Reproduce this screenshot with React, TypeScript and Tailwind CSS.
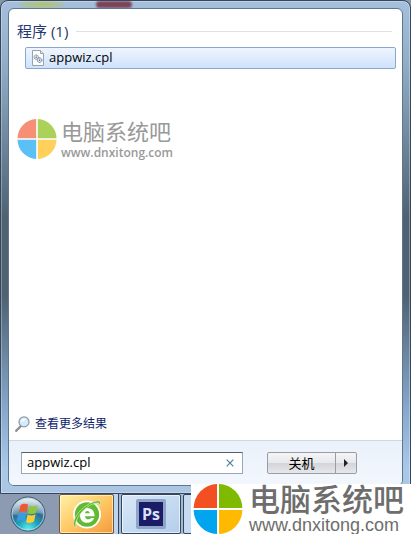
import clsx from 'clsx';

const uiFont = "font-['Open_Sans','Noto_Sans_CJK_SC',sans-serif]";
const logoFont = "font-['Liberation_Sans','Noto_Sans_CJK_SC',sans-serif]";

const FileIcon = () => (
  <svg viewBox="0 0 14 16" className="h-4 w-3.5 shrink-0" aria-hidden="true">
    <path d="M1.5 .5h8l3 3v12h-11z" fill="#fdfdfe" stroke="#9aa3ad" />
    <path d="M9.5 .5v3h3" fill="#e3e7ec" stroke="#9aa3ad" />
    <circle cx="5.2" cy="7.2" r="2.2" fill="#dce6f0" stroke="#62788f" strokeDasharray="1 .5" />
    <circle cx="8.6" cy="10.2" r="2.3" fill="#dce6f0" stroke="#4f6680" strokeDasharray="1 .5" />
    <circle cx="5.2" cy="7.2" r=".7" fill="#4f6680" />
    <circle cx="8.6" cy="10.2" r=".7" fill="#4f6680" />
  </svg>
);

const SearchIcon = () => (
  <svg viewBox="0 0 16 16" className="size-4 shrink-0" aria-hidden="true">
    <path d="M1.2 14.8l4.8-5" stroke="#77777d" strokeWidth="2.2" strokeLinecap="round" />
    <path d="M1.2 14.5l4.5-4.8" stroke="#b9b9bd" strokeWidth=".8" strokeLinecap="round" />
    <circle cx="9" cy="5.9" r="5" fill="#d5eafa" stroke="#8a98a6" strokeWidth="1.2" />
    <path d="M5.8 5.6a3.4 3.4 0 0 1 5-2.6c-1 1.7-2.8 2.7-5 2.6z" fill="#fff" />
  </svg>
);

const StartOrb = () => (
  <svg viewBox="0 0 36 36" className="size-9" aria-hidden="true">
    <defs>
      <radialGradient id="orb" cx=".5" cy=".95" r=".85">
        <stop offset="0" stopColor="#5ff0ee" />
        <stop offset=".35" stopColor="#1fa5c0" />
        <stop offset=".65" stopColor="#2f6d92" />
        <stop offset="1" stopColor="#a3b8c8" />
      </radialGradient>
      <linearGradient id="gloss" x1="0" y1="0" x2="0" y2="1">
        <stop offset="0" stopColor="#fff" stopOpacity=".75" />
        <stop offset="1" stopColor="#b8cbd8" stopOpacity=".3" />
      </linearGradient>
    </defs>
    <circle cx="18" cy="18" r="17" fill="url(#orb)" stroke="#3d5870" />
    <circle cx="18" cy="18" r="16" fill="none" stroke="#c5e4ec" strokeOpacity=".75" />
    <path d="M2.5 18A15.5 15.5 0 0 1 33.5 18C26 15 12 22 2.5 18z" fill="url(#gloss)" />
    <path d="M10.5 9.2c2.4-1.8 5-1.9 7.7-.4l-1.7 7.7c-2.6-1.4-5.2-1.2-7.7.5z" fill="#ec5a2d" />
    <path d="M19.6 9.5c2.7 1.3 5.2 1.2 8-.5l-1.7 7.7c-2.7 1.7-5.2 1.8-7.9.6z" fill="#8fc73e" />
    <path d="M8.4 18.3c2.5-1.7 5.1-1.9 7.7-.4l-1.6 7.4c-2.6-1.4-5.2-1.2-7.8.4z" fill="#3b9be0" />
    <path d="M17.6 18.7c2.7 1.2 5.2 1.1 8-.5L24 25.6c-2.7 1.7-5.3 1.8-8 .6z" fill="#ffcb30" />
  </svg>
);

const BrowserIcon = () => (
  <svg viewBox="0 0 32 32" className="size-8" aria-hidden="true">
    <circle cx="16" cy="16.5" r="14" fill="#fff" />
    <circle cx="16" cy="16.5" r="12.2" fill="#5fbb31" />
    <path d="M9 17.2a7.3 7.3 0 0 1 14.6 0v1.1H14c.3 3.4 4.4 4 6 1.7h3.3c-1.3 3.2-3.9 4.8-7.2 4.8-4.2 0-7.1-3-7.1-7.6zm5-2h4.7c-.3-2.8-4.2-2.8-4.7 0z" fill="#fff" />
    <path d="M5.5 29C.5 29.5 2 20 9.5 12.5 17 5 27 1 29 3.5c1 1.3.5 3-1 5 .7-2.3.4-3.2-.8-3.5C23 4 14 9.5 8.8 16.5 4.5 22.5 3.5 28 5.5 29z" fill="#5fb52e" stroke="#e6f8c9" strokeWidth=".6" />
  </svg>
);

const SiteLogo = ({ className, faded = false }: { className: string; faded?: boolean }) => (
  <svg viewBox="0 0 40 40" className={clsx('shrink-0', className)} aria-hidden="true">
    <path d="M19.2 19.2H.5A19.5 19.5 0 0 1 19.2 0z" fill={faded ? '#f58f76' : '#f25022'} />
    <path d="M20.8 19.2V0a19.5 19.5 0 0 1 18.7 19.2z" fill={faded ? '#abd15a' : '#7fba00'} />
    <path d="M19.2 20.8V40A19.5 19.5 0 0 1 .5 20.8z" fill={faded ? '#5bc0f5' : '#00a4ef'} />
    <path d="M20.8 20.8h18.7A19.5 19.5 0 0 1 20.8 40z" fill={faded ? '#ffd05c' : '#ffb900'} />
  </svg>
);

const StartMenu = () => (
  <section className="flex grow flex-col rounded-t-lg border border-[#34475c] bg-[linear-gradient(180deg,#a5bfdc_0,#92afc9_12%,#4e6272_44%,#4e6272_60%,#87a8cc_83%,#a9c9ea_95%,#abc5e2_100%)] p-[7px] shadow-[inset_0_0_0_1px_rgba(255,255,255,0.3)]">
    <div className="flex grow flex-col overflow-hidden rounded-md border border-[#5e768e] bg-white">
      <div className="flex grow flex-col px-1.5 pt-3">
        <h1 className="flex items-center gap-2 px-0.5 text-[15px] leading-5 text-[#26376f]">
          程序 (1)
          <span className="mr-0.5 h-px grow bg-[#dbe2e8]" />
        </h1>
        <a href="#appwiz" className="mt-1.5 ml-2.5 flex h-[22px] items-center gap-1 rounded-xs border border-[#8ba8cc] bg-linear-to-b from-[#eff5fe] to-[#cfe2fc] pl-[5px] text-[13px] text-black">
          <FileIcon />
          appwiz.cpl
        </a>
        <div className="mt-12 ml-0.5 flex items-center gap-1 text-[#999]">
          <SiteLogo className="size-10" faded />
          <div className="pt-1">
            <p className={clsx('text-[22px] leading-6', logoFont)}>电脑系统吧</p>
            <p className="text-xs leading-4 font-semibold">www.dnxitong.com</p>
          </div>
        </div>
        <a href="#more" className="mt-auto mb-2 flex items-center gap-1 text-xs text-[#101d6b]">
          <SearchIcon />
          查看更多结果
        </a>
      </div>
      <form className="flex items-start justify-between border-t border-[#ccd9e5] bg-linear-to-b from-[#eaf1fa] to-[#f3f7fd] pt-[11px] pr-[45px] pb-[11px] pl-3">
        <div className="flex h-[22px] w-[222px] items-center border border-[#9aa6b3] border-t-[#58616b] bg-white pr-2 pl-[5px]">
          <input aria-label="搜索程序和文件" defaultValue="appwiz.cpl" className="min-w-0 grow text-[13px] text-black outline-none" />
          <button type="reset" aria-label="清除">
            <svg viewBox="0 0 8 8" className="size-2" stroke="#4d7f9c" strokeWidth="1.2">
              <path d="M.7 .7l6.6 6.6M7.3 .7L.7 7.3" />
            </svg>
          </button>
        </div>
        <div className="flex h-[22px] rounded-xs border border-[#9a9da3] bg-[linear-gradient(180deg,#f4f4f6_0,#e8e9ec_48%,#d3d5da_52%,#e6e7ea_100%)]">
          <button type="button" className="w-[67px] text-[13px] leading-5 text-black">关机</button>
          <button type="button" aria-label="关机选项" className="flex w-[21px] items-center justify-center border-l border-[#9a9da3]">
            <svg viewBox="0 0 4 8" className="h-2 w-1" fill="#222"><path d="M0 0l4 4-4 4z" /></svg>
          </button>
        </div>
      </form>
    </div>
  </section>
);

const taskClasses = 'flex h-10 items-center justify-center rounded-xs border shadow-[inset_0_0_0_1px_rgba(255,255,255,0.6)]';

const Taskbar = () => (
  <nav className="flex h-10 shrink-0 bg-[#a3bad3]">
    <button type="button" aria-label="开始" className="flex w-[59px] items-center justify-center bg-[#8c9bb2] pr-1">
      <StartOrb />
    </button>
    <button type="button" aria-label="浏览器" className={clsx(taskClasses, 'w-[55px] border-[#70572d] bg-linear-to-br from-[#fff2a5] via-[#ffc866] to-[#f39b3c]')}>
      <BrowserIcon />
    </button>
    <span className="mr-0.5 w-[5px] border-r border-[#34465d] bg-[#bdd5ee]" />
    <button type="button" aria-label="Photoshop" className={clsx(taskClasses, 'w-[60px] border-[#34465d] bg-linear-to-br from-[#d9e8f8] to-[#b4cee9]')}>
      <span className="flex size-[30px] items-center justify-center rounded-xs border-3 border-[#8ea5ca] bg-[#1c1b66] text-base font-bold text-[#d5e2fb]">Ps</span>
    </button>
    <span className="ml-0.5 grow rounded-xs border border-[#34465d] bg-[#c6dbf1]" />
  </nav>
);

export default function App() {
  return (
    <main className={clsx('relative flex min-h-screen flex-col bg-[#8596a8]', uiFont)}>
      <StartMenu />
      {/* desktop icons showing through the glass edge */}
      <div className="absolute top-px right-4 left-4 flex h-[7px] overflow-hidden" aria-hidden="true">
        <span className="ml-1 w-11 bg-radial from-[#b3c466] to-transparent" />
        <span className="ml-8 w-9 rounded-sm bg-[#7d4459] blur-[1px]" />
      </div>
      <Taskbar />
      <div className={clsx('absolute right-0 bottom-0 flex h-[50px] w-[220px] items-center gap-1.5 bg-white pl-0.5 text-[#6d6d6d]', logoFont)}>
        <SiteLogo className="size-[50px]" />
        <div>
          <p className="text-[31px] leading-8 font-medium whitespace-nowrap">电脑系统吧</p>
          <p className="text-lg leading-4">www.dnxitong.com</p>
        </div>
      </div>
    </main>
  );
}
